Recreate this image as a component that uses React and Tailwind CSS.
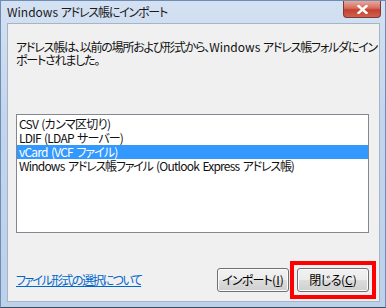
import React from "react";

const jp = "font-['Noto_Sans_CJK_JP','Noto_Sans',sans-serif] [font-feature-settings:'palt']";

// Japanese runs are set tighter, closer to Meiryo UI widths
function J({ children, t = "tracking-[-1.3px]" }) {
  return <span className={t}>{children}</span>;
}

function Button({ children, className = "" }) {
  return (
    <div
      className={`flex h-[24px] w-[72px] items-center justify-center rounded-[3px] border border-[#707070] bg-[linear-gradient(#f2f2f2_0%,#ebebeb_50%,#dddddd_50%,#cfcfcf_100%)] text-[12px] text-black shadow-[inset_0_0_0_1px_#fcfcfc] ${className}`}
    >
      {children}
    </div>
  );
}

const items = [
  <>CSV (<J t="tracking-[-0.7px]">カンマ区切り</J>)</>,
  <>LDIF (LDAP <J t="tracking-[-0.9px]">サーバー</J>)</>,
  <>vCard (VCF <J t="tracking-[-0.9px]">ファイル</J>)</>,
  <>
    Windows <J t="tracking-[-1.2px]">アドレス帳ファイル</J> (Outlook Express <J t="tracking-[-1.2px]">アドレス帳</J>)
  </>,
];

export default function App() {
  return (
    <div className={`flex h-[308px] w-[386px] flex-col border border-[#6f8db4] border-b-[#3c4a5c] bg-[linear-gradient(180deg,#d3e1f2_0%,#c2d5ec_40%,#bcd1ea_100%)] ${jp}`}>
      {/* title bar */}
      <div className="flex h-[22px] shrink-0 items-start justify-between">
        <span className="mt-[3px] whitespace-nowrap pl-[6px] text-[12px] leading-[16px] text-[#1a1a1a]">
          Windows <J t="tracking-[-1.2px]">アドレス帳にインポート</J>
        </span>
        <div className="mr-[4px] flex h-[17px] w-[38px] items-center justify-center rounded-b-[4px] border border-t-0 border-[#7a3b36] bg-[linear-gradient(#e9a99c_0%,#d46d5d_45%,#c4412e_55%,#d0614f_100%)]">
          <svg width="11" height="9" viewBox="0 0 11 9">
            <path d="M1.5 1 L9.5 8 M9.5 1 L1.5 8" stroke="#ffffff" strokeWidth="2.4" strokeLinecap="square" />
          </svg>
        </div>
      </div>

      {/* client area */}
      <div className="mb-[5px] ml-[6px] mr-[5px] flex flex-1 flex-col border border-[#a7b4c4] bg-[#f0f0f0] pl-[8px] pr-[10px] pt-[16px] text-[12px] text-[#111]">
        <p className="whitespace-nowrap leading-[13px]">
          <J t="tracking-[-1.2px]">アドレス帳は、以前の場所および形式から、</J>Windows{" "}
          <J t="tracking-[-1.2px]">アドレス帳フォルダにイン</J>
          <br />
          <J t="tracking-[-1.2px]">ポートされました。</J>
        </p>

        <div className="mt-[48px] h-[119px] border border-[#828790] bg-white pt-[2px]">
          {items.map((t, i) => (
            <div
              key={i}
              className={`h-[14px] whitespace-nowrap px-[2px] leading-[14px] tracking-[-0.8px] [word-spacing:1.5px] ${i === 2 ? "bg-[#3399ff] text-white" : "text-[#111]"}`}
            >
              {t}
            </div>
          ))}
        </div>

        <div className="mt-[35px] flex items-center justify-between">
          <a className="whitespace-nowrap text-[12px] tracking-[-1.6px] text-[#0066cc] underline">
            ファイル形式の選択について
          </a>
          <div className="flex gap-[8px]">
            <Button>
              <J t="tracking-[-0.8px]">インポート</J>(<span className="underline">I</span>)
            </Button>
            <div className="relative">
              <Button>
                <J t="tracking-[-0.5px]">閉じる</J>(<span className="underline">C</span>)
              </Button>
              <div className="pointer-events-none absolute -inset-[7px] border-4 border-[#ff0000]" />
            </div>
          </div>
        </div>
      </div>
    </div>
  );
}
